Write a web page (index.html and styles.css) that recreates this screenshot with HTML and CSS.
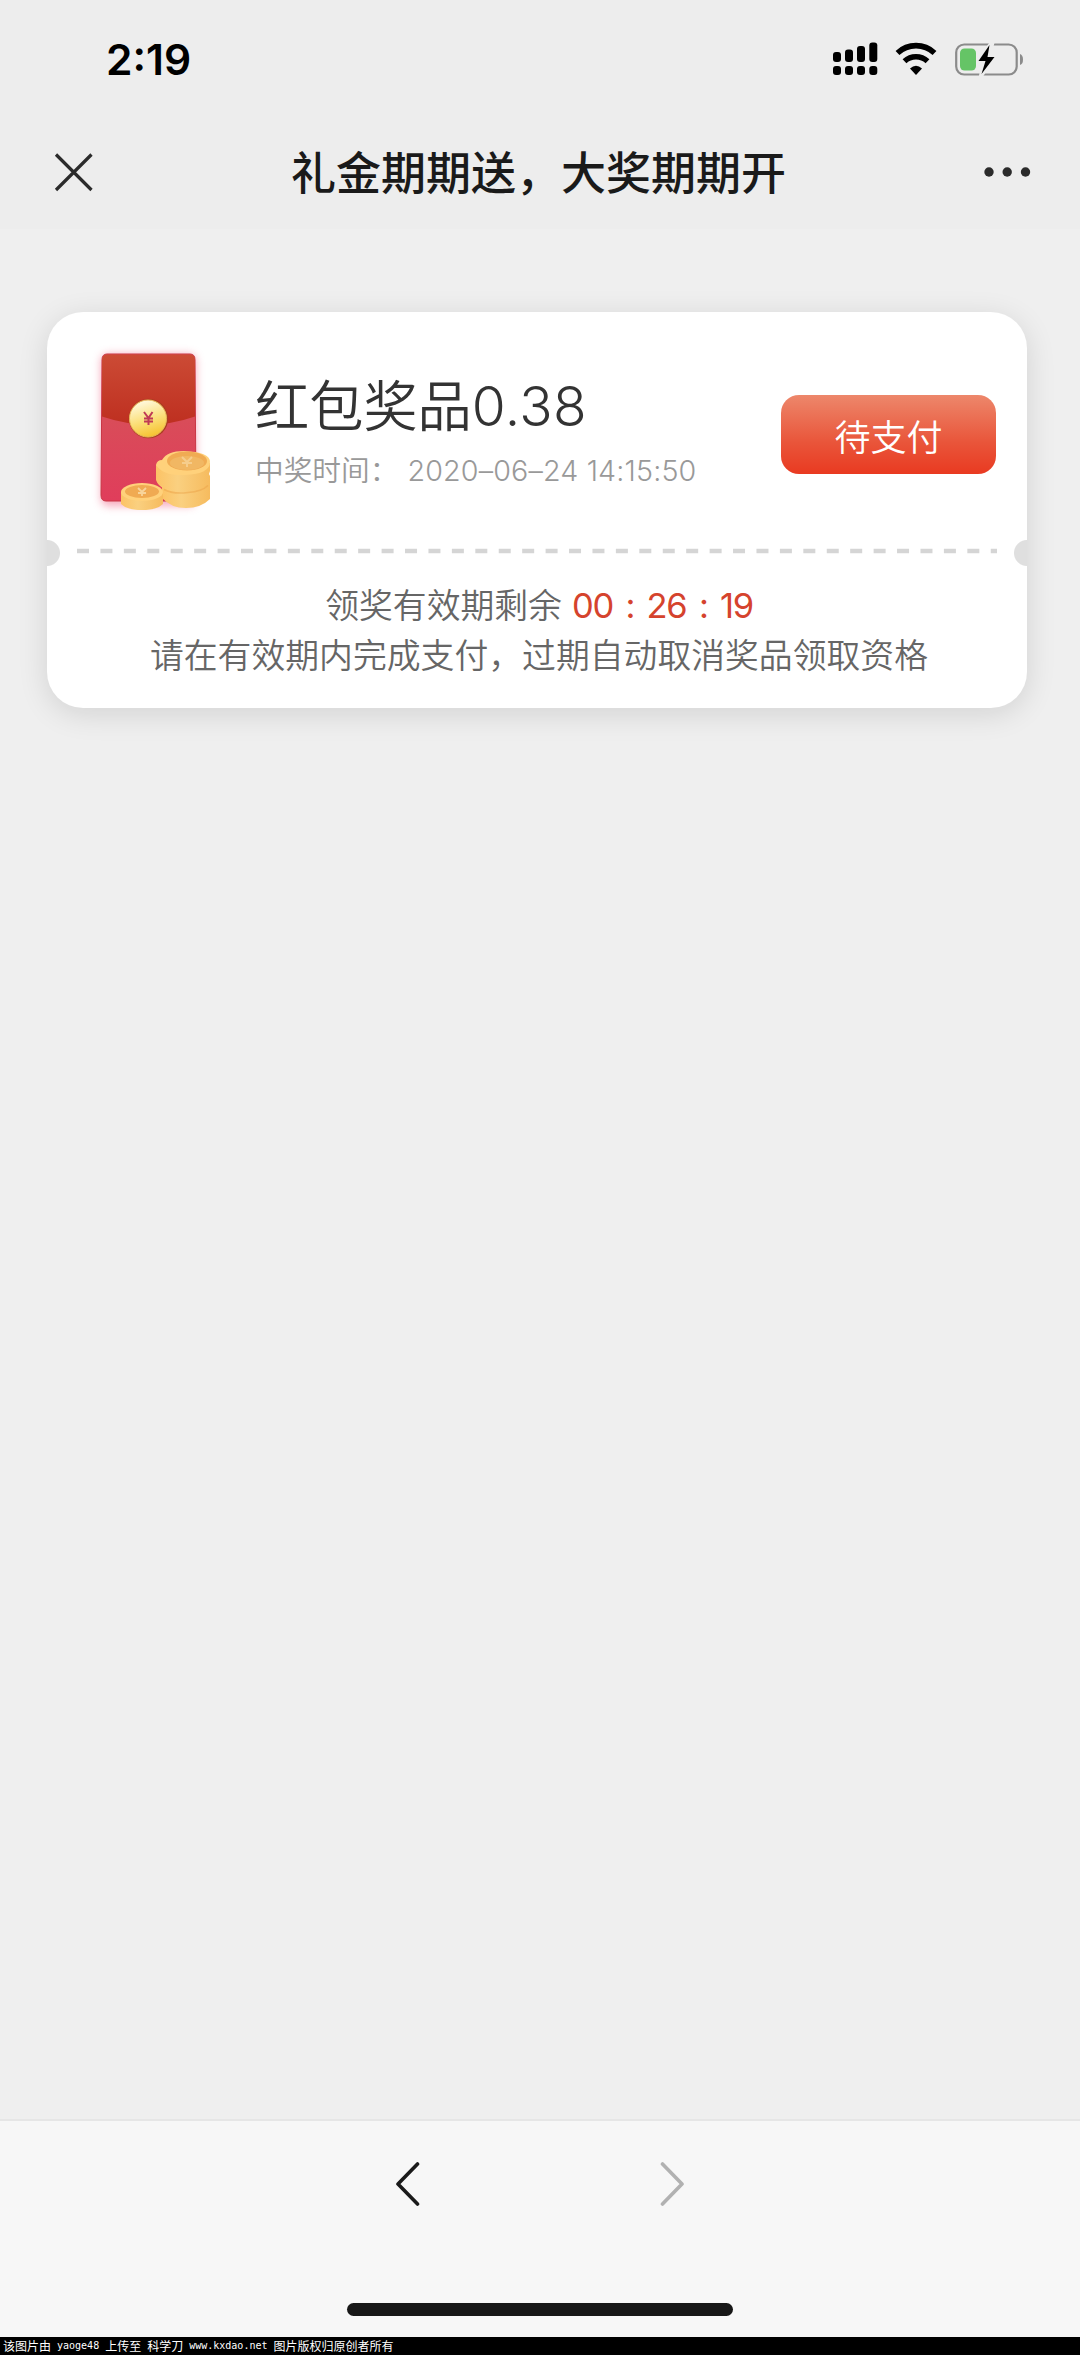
FILE: index.html
```html
<!DOCTYPE html>
<html lang="zh-CN">
<head>
<meta charset="utf-8">
<title>礼金期期送，大奖期期开</title>
<link rel="stylesheet" href="styles.css">
</head>
<body>
<header class="top">
  <div class="status">
    <span class="clock">2:19</span>
    <svg class="status-icons" width="194" height="40" viewBox="0 0 194 40">
      <g>
        <rect x="1" y="13" width="8" height="10" rx="3"/><rect x="13" y="10.500" width="8" height="12.500" rx="3"/><rect x="25" y="7" width="8" height="16" rx="3"/><rect x="37.300" y="3.500" width="8" height="19.500" rx="3"/>
        <rect x="1" y="27" width="8" height="9" rx="3"/><rect x="13" y="27" width="8" height="9" rx="3"/><rect x="25" y="27" width="8" height="9" rx="3"/><rect x="37.300" y="27" width="8" height="9" rx="3"/>
      </g>
      <g fill="none" stroke="#000" stroke-width="5.600"><path d="M65.500 14a27 27 0 0 1 37 0"/><path d="M72.500 22.300a17 17 0 0 1 23 0"/></g>
      <path d="M78 29.500q6-5.500 12 0l-6 6.500z"/>
      <rect x="124.200" y="5.500" width="60.500" height="30" rx="8" fill="none" stroke="#8b8b8b" stroke-width="2.200"/>
      <rect x="128" y="9.500" width="16" height="22" rx="4.500" fill="#65c466"/>
      <path d="M158.500 2 144 22h6L146.500 39h3.500L165 17h-6l4-15z" fill="#ededed"/>
      <path d="M157.500 6 146.500 22h7L149.500 35 162.500 18h-7z"/>
      <path d="M188 15q3 1 3 5.500t-3 5.500z" fill="#8b8b8b"/>
    </svg>
  </div>
  <div class="nav">
    <svg width="40" height="40" viewBox="0 0 40 40" fill="none" stroke="#2b2b2b" stroke-width="3.200"><path d="M3 2.500 38.500 38M38.500 2.500 3 38"/></svg>
    <h1>礼金期期送，大奖期期开</h1>
    <svg width="48" height="12" viewBox="0 0 48 12" fill="#2b2b2b"><circle cx="5" cy="6" r="4.700"/><circle cx="23.200" cy="6" r="4.700"/><circle cx="41.500" cy="6" r="4.700"/></svg>
  </div>
</header>
<main>
  <section class="card">
    <div class="prize">
      <svg class="packet" width="136" height="180" viewBox="90 340 136 180">
        <defs>
          <linearGradient id="body" x2="0" y2="1"><stop offset=".45" stop-color="#d94c59"/><stop offset="1" stop-color="#e03d5b"/></linearGradient>
          <linearGradient id="flap" x2="0" y2="1"><stop stop-color="#cc4b35"/><stop offset="1" stop-color="#be2f20"/></linearGradient>
          <linearGradient id="seal" x1=".3" x2=".6" y2="1"><stop stop-color="#fffbe5"/><stop offset=".55" stop-color="#fbdf79"/><stop offset="1" stop-color="#f5c12e"/></linearGradient>
          <linearGradient id="gold"><stop stop-color="#fcc365"/><stop offset=".4" stop-color="#fad080"/><stop offset="1" stop-color="#f6bb5e"/></linearGradient>
          <filter id="glow" x="-20%" y="-20%" width="140%" height="140%"><feGaussianBlur stdDeviation="4"/></filter>
        </defs>
        <rect x="101" y="354" width="95" height="152" rx="7" fill="#ee5579" opacity=".5" filter="url(#glow)"/>
        <path d="M107 354h83q5 0 5 6l1 136q0 5-6 5h-84q-5 0-5-6l1-135q0-6 5-6z" fill="url(#body)" stroke="#c93645"/>
        <path d="M107 354.500h83q5 0 5 6v56q-46 16-93 0v-56q0-6 5-6z" fill="url(#flap)"/>
        <circle cx="148.500" cy="418.500" r="19.800" fill="#ab3d20"/>
        <circle cx="148" cy="418.500" r="18.500" fill="url(#seal)" stroke="#e9b95b"/>
        <path d="m144 412 4.500 6 4-6M148.500 418v7M144 418.500h9M144 421.500h9" fill="none" stroke="#bf3a55" stroke-width="2"/>
        <path d="M162 484v14q9 10 24 10t24-9v-21z" fill="url(#gold)"/>
        <path d="M156 465v15q4 12 27 12t27-11v-5l-1-2 1-3v-8z" fill="url(#gold)"/>
        <path d="M164 489.500q9 5 24 3 14-1 20-7" fill="none" stroke="#eba247" stroke-width="1.500" opacity=".5"/>
        <path d="M156 465q1-5 6-5 5-9 22-9 26 1 26 11 0 12-25 13-22 1-29-10z" fill="#ffd17b"/>
        <ellipse cx="187" cy="461" rx="20" ry="9.500" fill="#f0ab53"/><ellipse cx="187" cy="463" rx="17" ry="7" fill="#f1b763"/>
        <path d="m182 457 5 5 5-5M187 461v6M182 463h10" fill="none" stroke="#f6cd8c" stroke-width="2"/>
        <path d="M121 492v12q6 6 21 6t21-6v-13z" fill="url(#gold)"/>
        <ellipse cx="142" cy="492" rx="21" ry="9" fill="#ffd17b"/><ellipse cx="142" cy="491.500" rx="17" ry="6.500" fill="#f0aa52"/>
        <path d="m138 488 4 4 4-4M142 491v5M138 493h8" fill="none" stroke="#f8d49a" stroke-width="1.800"/>
      </svg>
      <div class="info">
        <h2>红包奖品<span class="amount">0.38</span></h2>
        <p class="won"><span>中奖时间：</span><span class="date">2020–06–24 14:15:50</span></p>
      </div>
      <button class="pay">待支付</button>
    </div>
    <div class="tear"><svg width="920" height="6"><path d="M0 3h920" stroke="#d5d5d5" stroke-width="4.500" stroke-dasharray="12 11.430"/></svg></div>
    <div class="expiry">
      <p>领奖有效期剩余<span class="count"><span>00</span><span>:</span><span>26</span><span>:</span><span>19</span></span></p>
      <p>请在有效期内完成支付，过期自动取消奖品领取资格</p>
    </div>
  </section>
</main>
<nav class="toolbar">
  <div class="arrows">
    <svg width="24" height="46" viewBox="0 0 24 46" fill="none" stroke="#1a1a1a" stroke-width="3.600" stroke-linecap="round" stroke-linejoin="round"><path d="M21.500 3 2 23l19.500 20"/></svg>
    <svg width="24" height="46" viewBox="0 0 24 46" fill="none" stroke="#b1b1b1" stroke-width="3.600" stroke-linecap="round" stroke-linejoin="round"><path d="M2.500 3 22 23 2.500 43"/></svg>
  </div>
  <div class="home"></div>
</nav>
<footer class="credit"><span>该图片由</span><span class="user">yaoge48</span><span>上传至</span><span>科学刀</span><span class="site">www.kxdao.net</span><span>图片版权归原创者所有</span></footer>
</body>
</html>
```
FILE: styles.css
```css
* { box-sizing: border-box; }
body, h1, h2, p { margin: 0; }
body {
  width: 1080px;
  height: 2355px;
  display: flex;
  flex-direction: column;
  background: #efefef;
  font-family: Inter, "Noto Sans CJK SC", sans-serif;
  overflow: hidden;
}
.top { height: 229px; background: #ededed; }
.status {
  height: 118px;
  padding: 0 54px 0 106px;
  display: flex;
  align-items: center;
  justify-content: space-between;
}
.clock { margin-top: 2px; font-size: 42.500px; font-weight: 600; line-height: 50px; color: #000; }
.status-icons { margin-top: -1px; }
.nav {
  height: 108px;
  padding: 0 48px 0 53px;
  display: flex;
  align-items: center;
  justify-content: space-between;
}
.nav h1 { margin-top: 4px; font-size: 45px; font-weight: 500; line-height: 60px; color: #1a1a1a; }
main { flex: 1; padding: 83px 53px 0 47px; }
.card {
  height: 396px;
  border-radius: 36px;
  background:
    radial-gradient(circle at 0 241px, #dfdfdf 12.500px, transparent 13.500px),
    radial-gradient(circle at 100% 241px, #dfdfdf 12.500px, transparent 13.500px),
    #fff;
  box-shadow: 0 6px 30px rgba(0, 0, 0, .12);
}
.prize { height: 236px; padding: 0 31px 0 43px; display: flex; }
.packet { flex: none; margin-top: 28px; }
.info { flex: 1; padding: 54px 0 0 29px; white-space: nowrap; }
.info h2 { font-size: 54.200px; font-weight: 350; line-height: 80px; color: #333; }
.amount { font-size: 55px; letter-spacing: .4px; }
.won { display: flex; gap: 9px; font-size: 28.700px; font-weight: 350; line-height: 49px; color: #999; }
.date { letter-spacing: .15px; }
.pay {
  width: 215px;
  height: 79px;
  margin-top: 83px;
  padding: 0;
  border: 0;
  border-radius: 18px;
  background: linear-gradient(#ed876b, #e9553a 60%, #e93a21);
  color: #fff;
  font: 350 36px/76px "Noto Sans CJK SC", sans-serif;
}
.tear { height: 10px; padding: 0 30px; display: flex; }
.expiry { padding: 23px 0 0 4px; color: #666; font-size: 33.850px; font-weight: 350; line-height: 50px; }
.expiry p { display: flex; justify-content: center; }
.count { display: flex; margin-left: 10px; gap: 12.500px; color: #d5432d; letter-spacing: -1.300px; font-size: 34.500px; font-weight: 400; }
.toolbar {
  height: 218px;
  border-top: 2px solid #e6e6e6;
  background: #f7f7f7;
  display: flex;
  flex-direction: column;
  align-items: center;
  justify-content: space-between;
  padding: 40px 0 21px;
}
.arrows { display: flex; gap: 240px; }
.home { width: 386px; height: 13px; border-radius: 7px; background: #171717; }
.credit {
  height: 18px;
  padding-left: 3px;
  display: flex;
  gap: 6px;
  background: #000;
  color: #fff;
  font: 12px/17px "Noto Sans CJK SC", sans-serif;
  white-space: nowrap;
}
.user, .site { font-family: "DejaVu Sans Mono", monospace; font-size: 10px; }
```
